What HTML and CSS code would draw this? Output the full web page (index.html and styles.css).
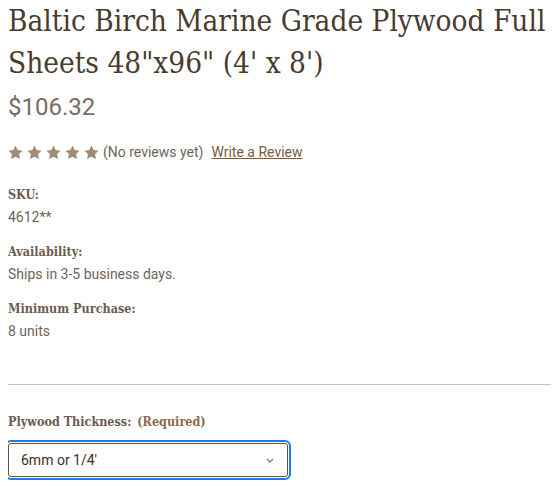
FILE: index.html
```html
<!doctype html>
<html>
  <head>
    <link rel="stylesheet" href="styles.css">
  </head>
  <body>
    <div class="product">
      <h1 class="product-title">Baltic Birch Marine Grade Plywood Full Sheets 48"x96" (4' x 8')</h1>
      <div class="price">$106.32</div>

      <div class="rating">
        <span class="stars">
          <svg viewBox="0 0 24 24"><path d="M12 .8l3.5 7.1 7.9 1.1-5.7 5.5 1.4 7.8L12 18.6l-7.1 3.7 1.4-7.8L.6 9l7.9-1.1z"/></svg>
          <svg viewBox="0 0 24 24"><path d="M12 .8l3.5 7.1 7.9 1.1-5.7 5.5 1.4 7.8L12 18.6l-7.1 3.7 1.4-7.8L.6 9l7.9-1.1z"/></svg>
          <svg viewBox="0 0 24 24"><path d="M12 .8l3.5 7.1 7.9 1.1-5.7 5.5 1.4 7.8L12 18.6l-7.1 3.7 1.4-7.8L.6 9l7.9-1.1z"/></svg>
          <svg viewBox="0 0 24 24"><path d="M12 .8l3.5 7.1 7.9 1.1-5.7 5.5 1.4 7.8L12 18.6l-7.1 3.7 1.4-7.8L.6 9l7.9-1.1z"/></svg>
          <svg viewBox="0 0 24 24"><path d="M12 .8l3.5 7.1 7.9 1.1-5.7 5.5 1.4 7.8L12 18.6l-7.1 3.7 1.4-7.8L.6 9l7.9-1.1z"/></svg>
        </span>
        <span class="review-count">(No reviews yet)</span>
        <a class="write-review" href="#">Write a Review</a>
      </div>

      <dl class="info">
        <dt>SKU:</dt>
        <dd>4612**</dd>
        <dt>Availability:</dt>
        <dd>Ships in 3-5 business days.</dd>
        <dt>Minimum Purchase:</dt>
        <dd>8 units</dd>
      </dl>

      <hr class="divider">

      <div class="option">
        <label class="option-label">Plywood Thickness: <small>(Required)</small></label>
        <div class="focus-ring">
          <div class="select">
            <span>6mm or 1/4'</span>
            <svg class="chevron" viewBox="0 0 8 5"><path d="M1 1l3 3 3-3"/></svg>
          </div>
        </div>
      </div>
    </div>
  </body>
</html>
```

FILE: styles.css
```css
body {
  margin: 0 8px 8px;
  font-family: Roboto, sans-serif;
  color: #6f645b;
  background: #fff;
}

.product-title {
  margin: 0;
  font-family: "DejaVu Serif Condensed", "DejaVu Serif", serif;
  font-stretch: condensed;
  font-weight: normal;
  font-size: 29.5px;
  line-height: 42px;
  color: #4a3b2f;
}

.price {
  margin-top: 9px;
  font-size: 24px;
  line-height: 28px;
  color: #776c63;
}

.rating {
  display: flex;
  align-items: center;
  margin-top: 23px;
  font-size: 14px;
  line-height: 17px;
}

.stars {
  display: flex;
  gap: 4px;
  margin-right: 4px;
}

.stars svg {
  width: 15px;
  height: 15px;
  fill: #a28b76;
}

.write-review {
  margin-left: 8px;
  color: #7b5c40;
  text-decoration: underline;
}

.info {
  margin: 26px 0 0;
}

.info dt,
.option-label {
  font-family: "DejaVu Serif Condensed", "DejaVu Serif", serif;
  font-stretch: condensed;
  font-weight: bold;
  font-size: 12.5px;
  line-height: 16px;
  color: #6b5b4f;
}

.info dd {
  margin: 5px 0 18px;
  font-size: 14px;
  line-height: 18px;
}

.divider {
  margin: 44px 0 0;
  border: 0;
  border-top: 1px solid #cbc0b5;
}

.option {
  margin-top: 29px;
}

.option-label {
  display: block;
}

.option-label small {
  font-size: 12.5px;
  color: #8a6a4c;
  margin-left: 2px;
}

/* focused select: blue ring drawn by a wrapper */
.focus-ring {
  width: fit-content;
  margin: 10px 0 0 -3px;
  padding: 1px;
  border: 2px solid #1a7cf0;
  border-radius: 6px;
}

.select {
  display: flex;
  align-items: center;
  justify-content: space-between;
  box-sizing: border-box;
  width: 280px;
  height: 34px;
  padding: 0 13px 0 12px;
  border: 1px solid #6b5440;
  border-radius: 3px;
  font-size: 14px;
  color: #3d3029;
}

.chevron {
  width: 8px;
  height: 5px;
  fill: none;
  stroke: #8a7868;
  stroke-width: 1.3;
}
```
